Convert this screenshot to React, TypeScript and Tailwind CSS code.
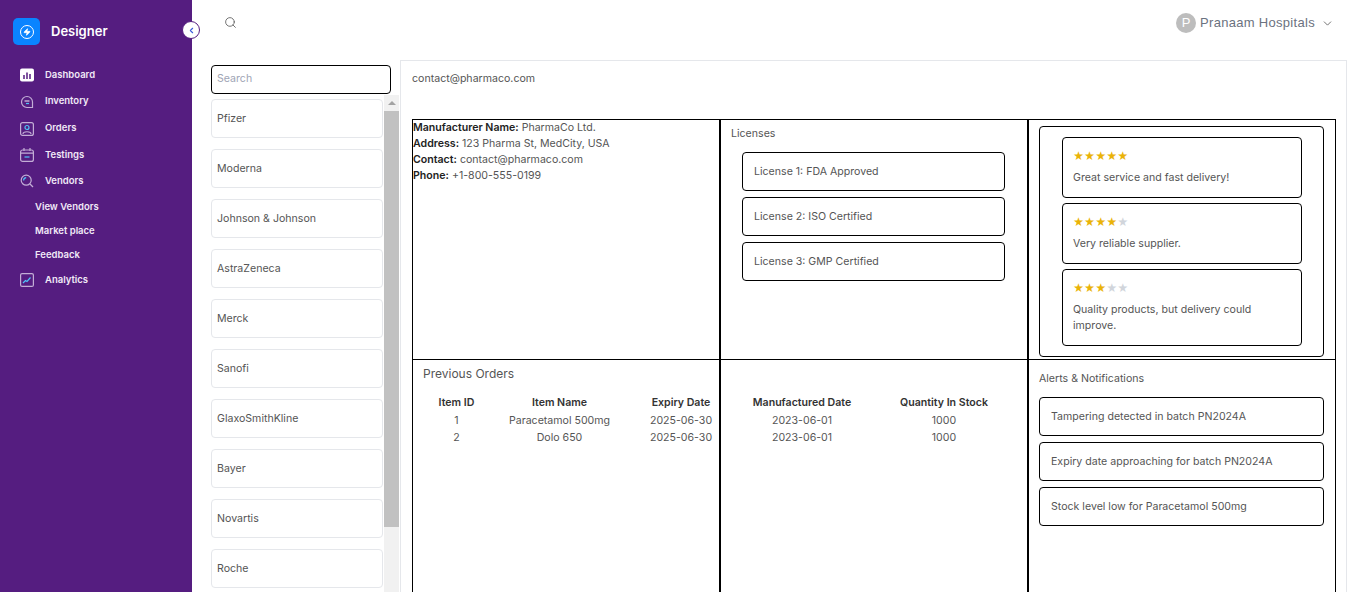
import { ChevronDown, ChevronLeft, Search, Zap } from "lucide-react";

const font = "font-['Inter','Noto_Sans',sans-serif]";

const vendors = [
  "Pfizer",
  "Moderna",
  "Johnson & Johnson",
  "AstraZeneca",
  "Merck",
  "Sanofi",
  "GlaxoSmithKline",
  "Bayer",
  "Novartis",
  "Roche",
];

const licenses = ["License 1: FDA Approved", "License 2: ISO Certified", "License 3: GMP Certified"];

const reviews = [
  { stars: 5, text: "Great service and fast delivery!", h: "h-[61px]" },
  { stars: 4, text: "Very reliable supplier.", h: "h-[61px]" },
  { stars: 3, text: "Quality products, but delivery could improve.", h: "h-[77px]" },
];

const alerts = [
  "Tampering detected in batch PN2024A",
  "Expiry date approaching for batch PN2024A",
  "Stock level low for Paracetamol 500mg",
];

const orders = [
  { id: 1, name: "Paracetamol 500mg" },
  { id: 2, name: "Dolo 650" },
];

function DashboardIcon() {
  return (
    <svg width="14" height="14" viewBox="0 0 14 14">
      <rect width="14" height="13" y="0.5" rx="2" fill="#fff" />
      <path d="M4 7v4M7 4.5V11M10 6v5" stroke="#551d80" strokeWidth="1.5" />
    </svg>
  );
}

function InventoryIcon() {
  return (
    <svg width="14" height="14" viewBox="0 0 14 14" fill="none">
      <path d="M7 1.5a5.5 5.5 0 1 0 0 11h5.5V7A5.5 5.5 0 0 0 7 1.5Z" stroke="#c3aed6" strokeWidth="1.2" />
      <path d="M4.5 6h5" stroke="#d8cbe4" strokeWidth="1.2" />
      <path d="M6 8.5h3" stroke="#4fc3f7" strokeWidth="1.2" />
    </svg>
  );
}

function OrdersIcon() {
  return (
    <svg width="14" height="14" viewBox="0 0 14 14" fill="none">
      <rect x="0.6" y="0.6" width="12.8" height="12.8" rx="2" stroke="#c3aed6" strokeWidth="1.2" />
      <circle cx="7" cy="5.5" r="2" stroke="#4fc3f7" strokeWidth="1.2" />
      <path d="M3 12c0-3 8-3 8 0" stroke="#c3aed6" strokeWidth="1.2" />
    </svg>
  );
}

function TestingsIcon() {
  return (
    <svg width="14" height="14" viewBox="0 0 14 14" fill="none">
      <rect x="0.6" y="2" width="12.8" height="11.4" rx="2" stroke="#c3aed6" strokeWidth="1.2" />
      <path d="M4 0v3M10 0v3M1 5.2h12" stroke="#c3aed6" strokeWidth="1.2" />
      <path d="M4.5 9h5" stroke="#4fc3f7" strokeWidth="1.2" />
    </svg>
  );
}

function VendorsIcon() {
  return (
    <svg width="14" height="14" viewBox="0 0 14 14" fill="none">
      <circle cx="6.2" cy="6.2" r="5" stroke="#c3aed6" strokeWidth="1.2" />
      <path d="M10 10l3 3" stroke="#c3aed6" strokeWidth="1.2" />
      <path d="M3.6 6.4a2.8 2.8 0 0 1 2.6-2.8" stroke="#4fc3f7" strokeWidth="1.2" />
    </svg>
  );
}

function AnalyticsIcon() {
  return (
    <svg width="14" height="14" viewBox="0 0 14 14" fill="none">
      <rect x="0.6" y="0.6" width="12.8" height="12.8" rx="1.5" stroke="#c3aed6" strokeWidth="1.2" />
      <path d="M3 10l2.5-2.5 1.5 1L10.5 4.5" stroke="#4fc3f7" strokeWidth="1.2" />
    </svg>
  );
}

function NavItem({ icon, label, className }: { icon: React.ReactNode; label: string; className: string }) {
  return (
    <div className={`flex items-center gap-[11px] pl-5 ${className}`}>
      <span className="flex h-[14px] w-[14px] items-center justify-center">{icon}</span>
      <span>{label}</span>
    </div>
  );
}

function Sidebar() {
  return (
    <aside className="relative h-full w-[192px] shrink-0 bg-[#551d80] text-[9.5px] font-semibold text-[#f1e9f7]">
      <div className="flex items-center gap-[11px] pl-[13px] pt-[18px]">
        <div className="flex h-[27px] w-[27px] items-center justify-center rounded-[5px] bg-[#0a84ff]">
          <span className="flex h-[14px] w-[14px] items-center justify-center rounded-full border-[1.5px] border-white">
            <Zap size={8} strokeWidth={2} className="fill-white text-white" />
          </span>
        </div>
        <span className="text-[13px] font-semibold text-white">Designer</span>
      </div>
      <button className="absolute left-[182px] top-[21px] flex h-[18px] w-[18px] items-center justify-center rounded-full border border-[#551d80] bg-white">
        <ChevronLeft size={9} strokeWidth={3} className="text-[#3b5bdb]" />
      </button>
      <nav className="mt-[17px] flex flex-col">
        <NavItem icon={<DashboardIcon />} label="Dashboard" className="h-[26px]" />
        <NavItem icon={<InventoryIcon />} label="Inventory" className="h-[27px]" />
        <NavItem icon={<OrdersIcon />} label="Orders" className="h-[27px]" />
        <NavItem icon={<TestingsIcon />} label="Testings" className="h-[26px]" />
        <NavItem icon={<VendorsIcon />} label="Vendors" className="h-[26px]" />
        <div className="mt-px flex h-[24px] items-center pl-[35px]">View Vendors</div>
        <div className="flex h-[24px] items-center pl-[35px]">Market place</div>
        <div className="flex h-[24px] items-center pl-[35px]">Feedback</div>
        <NavItem icon={<AnalyticsIcon />} label="Analytics" className="h-[26px]" />
      </nav>
    </aside>
  );
}

function TopBar() {
  return (
    <header className="flex h-[60px] items-start justify-between pl-[32px] pr-[31px]">
      <Search size={13} strokeWidth={1.5} className="mt-4 text-[#555]" />
      <div className="mt-[13px] flex items-center gap-1">
        <span className="flex h-5 w-5 items-center justify-center rounded-full bg-[#bdbdbd] text-[13px] font-medium text-white font-['Liberation_Sans',sans-serif]">
          P
        </span>
        <span className="text-[13px] tracking-[0.3px] text-[#6b7280] font-['Liberation_Sans',sans-serif]">
          Pranaam Hospitals
        </span>
        <ChevronDown size={13} strokeWidth={1.5} className="ml-[2px] text-[#555]" />
      </div>
    </header>
  );
}

function VendorList() {
  return (
    <div className="w-[189px] shrink-0">
      <input
        placeholder="Search"
        className="mt-[5px] block h-[29px] w-[180px] rounded border border-black px-[5px] pb-[3px] text-[10.6px] outline-none placeholder:text-[#a0a5b5]"
      />
      <div className="mt-[1px] flex">
        <div className="flex w-[172px] flex-col gap-[11px] pt-1">
          {vendors.map((v) => (
            <div
              key={v}
              className="flex h-[39px] shrink-0 items-center rounded border border-gray-200 px-[5px] text-[10.6px] text-[#555]"
            >
              {v}
            </div>
          ))}
        </div>
        <div className="ml-[1px] h-[497px] w-[15px] shrink-0 bg-[#f1f1f1]">
          <div className="mx-auto mt-[6px] h-0 w-0 border-x-[4px] border-b-[4px] border-x-transparent border-b-[#a3a3a3]" />
          <div className="mt-[6px] h-[416px] bg-[#c1c1c1]" />
        </div>
      </div>
    </div>
  );
}

function Stars({ n }: { n: number }) {
  return (
    <div className="flex text-[10.6px] leading-4">
      {[0, 1, 2, 3, 4].map((i) => (
        <span key={i} className={i < n ? "text-[#eab308]" : "text-[#d1d5db]"}>
          ★
        </span>
      ))}
    </div>
  );
}

function BoxRow({ text }: { text: string }) {
  return <div className="flex h-[39px] items-center rounded border border-black pl-[11px]">{text}</div>;
}

function OrdersTable() {
  const th = "pb-[1px] text-center text-[10.6px] font-semibold text-[#333]";
  const td = "text-center text-[10.6px] leading-[17px] text-[#555]";
  return (
    <table className="ml-[2px] mt-[11px] w-[590px] table-fixed border-collapse">
      <thead>
        <tr>
          <th className={`${th} w-[63px]`}>Item ID</th>
          <th className={`${th} w-[143px]`}>Item Name</th>
          <th className={`${th} w-[100px]`}>Expiry Date</th>
          <th className={`${th} w-[142px]`}>Manufactured Date</th>
          <th className={th}>Quantity In Stock</th>
        </tr>
      </thead>
      <tbody>
        {orders.map((o) => (
          <tr key={o.id}>
            <td className={td}>{o.id}</td>
            <td className={td}>{o.name}</td>
            <td className={td}>2025-06-30</td>
            <td className={td}>2023-06-01</td>
            <td className={td}>1000</td>
          </tr>
        ))}
      </tbody>
    </table>
  );
}

function DetailPanel() {
  return (
    <div className="h-[540px] w-[947px] shrink-0 overflow-hidden border border-gray-200 pl-[11px] text-[10.6px] text-[#555]">
      <p className="mt-[10px] h-[48px]">contact@pharmaco.com</p>
      <div className="grid h-[600px] w-[924px] grid-cols-3 grid-rows-[240px_1fr]">
        <div className="border border-b-0 border-black leading-[16px]">
          <p><b className="font-semibold text-[#222]">Manufacturer Name:</b> PharmaCo Ltd.</p>
          <p><b className="font-semibold text-[#222]">Address:</b> 123 Pharma St, MedCity, USA</p>
          <p><b className="font-semibold text-[#222]">Contact:</b> contact@pharmaco.com</p>
          <p><b className="font-semibold text-[#222]">Phone:</b> +1-800-555-0199</p>
        </div>
        <div className="border border-b-0 border-black pl-[10px] pt-[7px]">
          <p className="leading-[13px]">Licenses</p>
          <div className="mt-[12px] flex w-[263px] translate-x-[11px] flex-col gap-[6px]">
            {licenses.map((l) => (
              <BoxRow key={l} text={l} />
            ))}
          </div>
        </div>
        <div className="border border-b-0 border-black p-[6px] pb-[2px] pl-[10px] pr-[11px]">
          <div className="flex h-[231px] flex-col gap-[5px] rounded border border-black pl-[22px] pr-[21px] pt-[10px]">
            {reviews.map((r) => (
              <div key={r.stars} className={`${r.h} shrink-0 rounded border border-black px-[10px] pt-[11px]`}>
                <Stars n={r.stars} />
                <p className="mt-[5px] leading-4">{r.text}</p>
              </div>
            ))}
          </div>
        </div>
        <div className="border border-black pl-[10px] pt-[4px]">
          <p className="text-[12px] leading-5">Previous Orders</p>
          <OrdersTable />
        </div>
        <div className="border border-black" />
        <div className="border border-black pl-[10px] pr-[11px] pt-[12px]">
          <p className="leading-[13px]">Alerts &amp; Notifications</p>
          <div className="mt-[12px] flex flex-col gap-[6px]">
            {alerts.map((a) => (
              <BoxRow key={a} text={a} />
            ))}
          </div>
        </div>
      </div>
    </div>
  );
}

export default function App() {
  return (
    <div className={`flex h-[592px] w-[1365px] overflow-hidden bg-white ${font}`}>
      <Sidebar />
      <main className="min-w-0 flex-1">
        <TopBar />
        <div className="flex pl-[19px]">
          <VendorList />
          <DetailPanel />
        </div>
      </main>
    </div>
  );
}
